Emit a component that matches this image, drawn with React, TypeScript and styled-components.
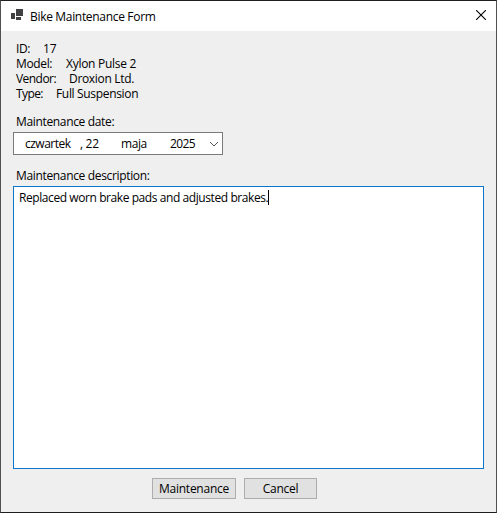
import React from "react";
import styled, { createGlobalStyle } from "styled-components";

const GlobalStyle = createGlobalStyle`
  *, *::before, *::after { box-sizing: border-box; }
  body { margin: 0; background: #efefef; overflow: hidden; }
  button { font: inherit; color: inherit; }
`;

const Dialog = styled.main`
  display: flex;
  flex-direction: column;
  width: 497px;
  height: 513px;
  background: #efefef;
  border: 1px solid #505052;
  border-top-color: #211e22;
  border-bottom-color: #1d1c1e;
  color: #000;
  font: 12px/15px "Open Sans", "Noto Sans", sans-serif;
  letter-spacing: -0.34px;
  white-space: pre;
`;

const TitleBar = styled.header`
  display: flex;
  align-items: center;
  flex: none;
  height: 30px;
  padding: 0 10px 0 10px;
  background: #fff;
`;

const AppIcon = styled.svg`
  width: 13px;
  height: 12px;
  margin: 0 6px 2px 0;
`;

const Title = styled.span`
  letter-spacing: -0.32px;
`;

const CloseButton = styled.button`
  display: flex;
  margin: 0 0 2px auto;
  padding: 0;
  border: 0;
  background: none;
`;

const Form = styled.section`
  display: flex;
  flex-direction: column;
  flex: 1;
  padding: 10px 12px 0;
`;

const Details = styled.dl`
  margin: 0 0 13px 3px;
`;

const Detail = styled.div`
  display: flex;
  height: 15px;
`;

const Term = styled.dt<{ $width: number; $spacing: number }>`
  width: ${(p) => p.$width}px;
  letter-spacing: ${(p) => p.$spacing}px;
`;

const Value = styled.dd<{ $spacing: number }>`
  margin: 0;
  letter-spacing: ${(p) => p.$spacing}px;
`;

const FieldLabel = styled.label`
  height: 15px;
  margin: 0 0 3px 3px;
`;

const DatePicker = styled.div`
  display: flex;
  align-items: center;
  width: 210px;
  height: 23px;
  margin-bottom: 13px;
  padding: 0 3px 0 11px;
  border: 1px solid #7a7a7a;
  background: #fff;
`;

const DatePart = styled.span<{ $width: number; $spacing: number }>`
  width: ${(p) => p.$width}px;
  letter-spacing: ${(p) => p.$spacing}px;
`;

const Chevron = styled.svg`
  width: 10px;
  height: 6px;
  margin-left: auto;
`;

const Description = styled.div`
  display: flex;
  height: 283px;
  padding: 3px 5px;
  border: 1px solid #0f75c8;
  background: #fff;
`;

const DescriptionText = styled.span`
  letter-spacing: -0.42px;
`;

const Caret = styled.i`
  width: 1px;
  height: 15px;
  background: #000;
`;

const Actions = styled.footer`
  display: flex;
  gap: 8px;
  margin: 9px 0 0 139px;
`;

const ActionButton = styled.button<{ $width: number }>`
  width: ${(p) => p.$width}px;
  height: 21px;
  padding: 0;
  border: 1px solid #adadad;
  background: #e1e1e1;
  letter-spacing: -0.25px;
  line-height: 17px;
`;

const details = [
  { term: "ID:", value: "17", width: 27, termSpacing: -0.4, valueSpacing: -0.2 },
  { term: "Model:", value: "Xylon Pulse 2", width: 50, termSpacing: -0.35, valueSpacing: -0.27 },
  { term: "Vendor:", value: "Droxion Ltd.", width: 53, termSpacing: -0.55, valueSpacing: -0.32 },
  { term: "Type:", value: "Full Suspension", width: 40, termSpacing: -0.6, valueSpacing: -0.33 },
];

const dateParts = [
  { text: "czwartek", width: 55, spacing: -0.5 },
  { text: ", 22", width: 41, spacing: -0.3 },
  { text: "maja", width: 49, spacing: -0.4 },
  { text: "2025", width: 27, spacing: -0.6 },
];

export default function App() {
  return (
    <>
      <GlobalStyle />
      <Dialog>
        <TitleBar>
          <AppIcon viewBox="0 0 13 12" fill="#414143" shapeRendering="crispEdges">
            <path d="M5 0h7v7H5zM0 4h4v6H0zM5 8h5v3H5z" />
          </AppIcon>
          <Title>Bike Maintenance Form</Title>
          <CloseButton aria-label="Close">
            <svg width="10" height="10" viewBox="0 0 10 10" fill="none" stroke="#000" strokeWidth="1.1">
              <path d="M0 0l10 10M10 0L0 10" />
            </svg>
          </CloseButton>
        </TitleBar>
        <Form>
          <Details>
            {details.map((d) => (
              <Detail key={d.term}>
                <Term $width={d.width} $spacing={d.termSpacing}>{d.term}</Term>
                <Value $spacing={d.valueSpacing}>{d.value}</Value>
              </Detail>
            ))}
          </Details>
          <FieldLabel>Maintenance date:</FieldLabel>
          <DatePicker>
            {dateParts.map((part) => (
              <DatePart key={part.text} $width={part.width} $spacing={part.spacing}>{part.text}</DatePart>
            ))}
            <Chevron viewBox="0 0 10 6" fill="none" stroke="#555">
              <path d="M1 1l4 4l4-4" />
            </Chevron>
          </DatePicker>
          <FieldLabel>Maintenance description:</FieldLabel>
          <Description>
            <DescriptionText>Replaced worn brake pads and adjusted brakes.</DescriptionText>
            <Caret />
          </Description>
          <Actions>
            <ActionButton $width={84}>Maintenance</ActionButton>
            <ActionButton $width={73}>Cancel</ActionButton>
          </Actions>
        </Form>
      </Dialog>
    </>
  );
}
